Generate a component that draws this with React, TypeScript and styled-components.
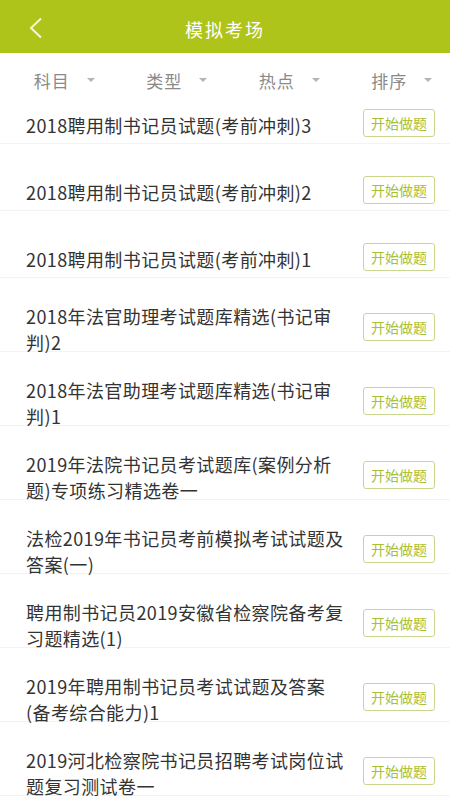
import { useLayoutEffect, useRef } from "react";
import styled, { createGlobalStyle } from "styled-components";

const GlobalStyle = createGlobalStyle`
    html, body {
        margin: 0;
        padding: 0;
        background: #fff;
        font-family: "Noto Sans CJK SC", "Noto Sans", sans-serif;
    }
    #root {
        height: 800px;
    }
`;

const Page = styled.div`
    height: 800px;
    display: flex;
    flex-direction: column;
    overflow: hidden;
`;

const Header = styled.header`
    height: 53px;
    box-sizing: border-box;
    padding-top: 4px;
    flex-shrink: 0;
    background: #aec41a;
    display: flex;
    align-items: center;
    justify-content: center;
    position: relative;
`;

const BackButton = styled.button`
    position: absolute;
    left: 24px;
    top: 14px;
    width: 24px;
    height: 28px;
    padding: 0;
    border: none;
    background: none;
    display: flex;
    align-items: center;
    justify-content: center;
`;

const Title = styled.h1`
    margin: 0;
    color: #fff;
    font-size: 18px;
    font-weight: 400;
    letter-spacing: 2px;
`;

const FilterBar = styled.div`
    height: 50px;
    box-sizing: border-box;
    padding-top: 4px;
    flex-shrink: 0;
    display: grid;
    grid-template-columns: repeat(4, 1fr);
    background: #fff;
`;

const Filter = styled.div`
    display: flex;
    align-items: center;
    justify-content: center;
    padding-left: 16px;
    gap: 17px;
    color: #8a8a8a;
    font-size: 17px;
    letter-spacing: 1px;
`;

const Caret = styled.span`
    width: 0;
    height: 0;
    border-left: 4px solid transparent;
    border-right: 4px solid transparent;
    border-top: 4px solid #b4b4b4;
`;

const List = styled.div`
    flex: 1;
    overflow-y: auto;
    scrollbar-width: none;
    &::-webkit-scrollbar {
        display: none;
    }
`;

const Row = styled.div`
    min-height: 67px;
    box-sizing: border-box;
    display: flex;
    align-items: center;
    padding: 25px 15px 0 26px;
    border-bottom: 1px solid #f3f3f3;
    gap: 14px;
`;

const RowTitle = styled.div`
    flex: 1;
    max-width: 326px;
    margin-bottom: -4px;
    color: #333;
    font-size: 18px;
    line-height: 26px;
    letter-spacing: 0.4px;
`;

const StartButton = styled.button`
    flex-shrink: 0;
    margin-left: auto;
    width: 72px;
    height: 28px;
    padding: 0;
    border: 1px solid #c9d78c;
    border-radius: 3px;
    background: #fff;
    color: #a9c034;
    font-family: inherit;
    font-size: 14px;
`;

const filters = ["科目", "类型", "热点", "排序"];

const papers = [
    "2018聘用制书记员试题(考前冲刺)3",
    "2018聘用制书记员试题(考前冲刺)2",
    "2018聘用制书记员试题(考前冲刺)1",
    "2018年法官助理考试题库精选(书记审判)2",
    "2018年法官助理考试题库精选(书记审判)1",
    "2019年法院书记员考试题库(案例分析题)专项练习精选卷一",
    "法检2019年书记员考前模拟考试试题及答案(一)",
    "聘用制书记员2019安徽省检察院备考复习题精选(1)",
    "2019年聘用制书记员考试试题及答案(备考综合能力)1",
    "2019河北检察院书记员招聘考试岗位试题复习测试卷一",
    "2019年书记员考试速录专项练习题",
];

function App() {
    const listRef = useRef<HTMLDivElement>(null);

    // the list in the picture is scrolled a little
    useLayoutEffect(() => {
        if (listRef.current) listRef.current.scrollTop = 26;
    }, []);

    return (
        <Page>
            <GlobalStyle />
            <Header>
                <BackButton aria-label="返回">
                    <svg width="14" height="22" viewBox="0 0 14 22">
                        <path d="M12 1.5 L2 11 L12 20.5" fill="none" stroke="#f4f7d8" strokeWidth="2" />
                    </svg>
                </BackButton>
                <Title>模拟考场</Title>
            </Header>
            <FilterBar>
                {filters.map((f) => (
                    <Filter key={f}>
                        {f}
                        <Caret />
                    </Filter>
                ))}
            </FilterBar>
            <List ref={listRef}>
                {papers.map((p) => (
                    <Row key={p}>
                        <RowTitle>{p}</RowTitle>
                        <StartButton>开始做题</StartButton>
                    </Row>
                ))}
            </List>
        </Page>
    );
}

export default App;
